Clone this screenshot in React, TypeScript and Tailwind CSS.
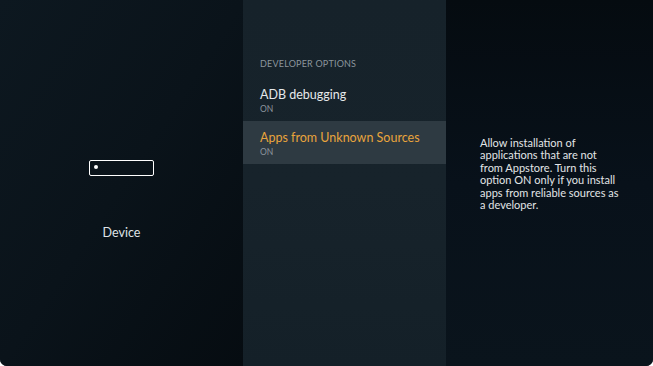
import React from "react";

const App: React.FC = () => {
  return (
    <div className="w-[653px] h-[366px] bg-white" style={{ fontFamily: "Lato, 'Open Sans', sans-serif" }}>
      <div className="flex h-full w-full overflow-hidden rounded-b-[7px] bg-[#080f15]">
        {/* Left column */}
        <div className="w-[243px] h-full bg-gradient-to-br from-[#0d1820] via-[#0a131a] to-[#060c11] flex flex-col items-center">
          <div className="mt-[160px] ml-[-1px] w-[65px] h-[16px] border-[1.5px] border-white rounded-[2px] relative">
            <span className="absolute left-[4px] top-[4px] w-[4px] h-[4px] rounded-full bg-white" />
          </div>
          <div className="mt-[48px] text-[12.5px] text-[#dfe3e6]">Device</div>
        </div>

        {/* Middle column */}
        <div className="w-[203px] h-full bg-gradient-to-b from-[#16222a] via-[#17232b] to-[#142028] flex flex-col">
          <div className="mt-[57px] px-[17px] text-[9px] tracking-[0.2px] text-[#8b959c]">DEVELOPER OPTIONS</div>
          <div className="mt-[16px] px-[17px]">
            <div className="text-[12.5px] leading-[16px] text-[#e6e9eb]">ADB debugging</div>
            <div className="mt-[1px] text-[8.5px] leading-[11px] text-[#8b959c]">ON</div>
          </div>
          <div className="mt-[6px] h-[43px] bg-[#2e3a42] px-[17px] pt-[9px]">
            <div className="text-[12.5px] leading-[16px] text-[#e9a43c]">Apps from Unknown Sources</div>
            <div className="mt-[1px] text-[8.5px] leading-[11px] text-[#8b959c]">ON</div>
          </div>
        </div>

        {/* Right column */}
        <div className="flex-1 h-full bg-gradient-to-b from-[#050b10] via-[#08111a] to-[#0a141c]">
          <p className="mt-[137px] ml-[34px] whitespace-nowrap text-[11px] leading-[12.4px] text-[#e2e5e7]">
            Allow installation of<br />
            applications that are not<br />
            from Appstore. Turn this<br />
            option ON only if you install<br />
            apps from reliable sources as<br />
            a developer.
          </p>
        </div>
      </div>
    </div>
  );
};

export default App;
